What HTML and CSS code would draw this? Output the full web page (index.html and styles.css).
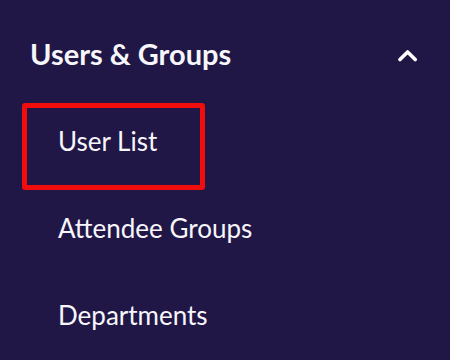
FILE: index.html
```html
<!DOCTYPE html>
<html lang="en">
<head>
    <meta charset="UTF-8">
    <meta name="viewport" content="width=device-width, initial-scale=1.0">
    <title>Users &amp; Groups</title>
    <link rel="stylesheet" href="styles.css">
</head>
<body>
    <nav class="sidebar">
        <div class="group-header">
            <span class="group-title">Users &amp; Groups</span>
            <svg class="chevron" width="24" height="16" viewBox="0 0 24 16">
                <path d="M2 13.6 L9.6 6 L17.2 13.6" fill="none" stroke="#fff" stroke-width="3.6" stroke-linecap="round" stroke-linejoin="round"/>
            </svg>
        </div>
        <ul class="group-items">
            <li class="nav-item active">User List</li>
            <li class="nav-item">Attendee Groups</li>
            <li class="nav-item">Departments</li>
        </ul>
    </nav>
</body>
</html>
```

FILE: styles.css
```css
* {
    margin: 0;
    padding: 0;
    box-sizing: border-box;
}

body {
    font-family: 'Lato', 'Liberation Sans', sans-serif;
    background: #201747;
    color: #f7f6fa;
    min-height: 100vh;
}

.sidebar {
    padding: 36px 28px 0 30px;
}

.group-header {
    display: flex;
    align-items: center;
    justify-content: space-between;
    height: 35px;
}

.group-title {
    font-size: 29px;
    line-height: 35px;
    font-weight: bold;
}

.chevron {
    display: block;
}

.group-items {
    list-style: none;
    margin-top: 32px;
    margin-left: -8px;
}

.nav-item {
    width: 183px;
    height: 87px;
    padding: 18px 0 0 31px;
    font-size: 26px;
    line-height: 31px;
    white-space: nowrap;
    border: 5px solid transparent;
    border-radius: 3px;
}

.nav-item.active {
    border-color: #f20d0d;
}
```
